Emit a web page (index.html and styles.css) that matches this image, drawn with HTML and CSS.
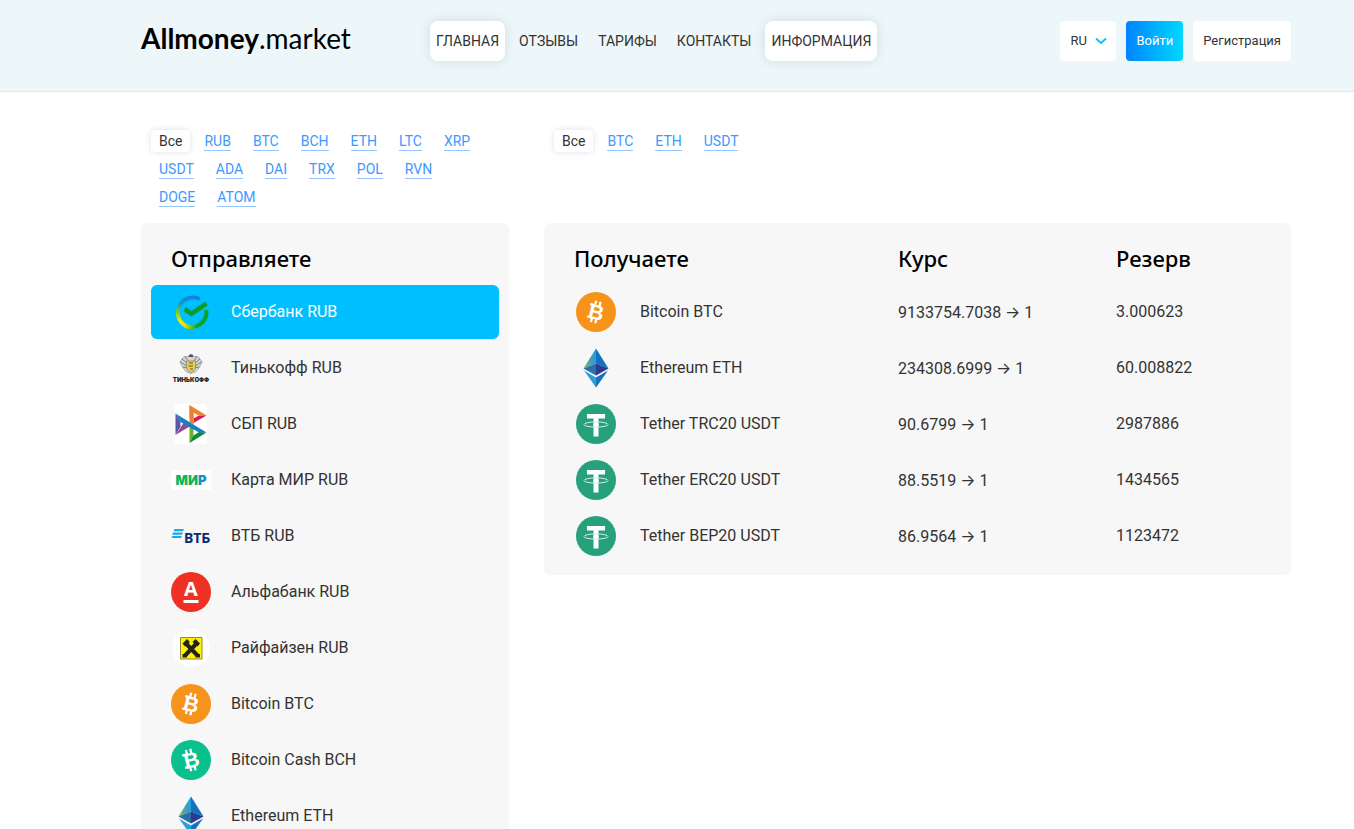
FILE: index.html
```html
<!DOCTYPE html>
<html lang="ru">
<head>
<meta charset="utf-8">
<title>Allmoney.market</title>
<meta name="viewport" content="width=device-width, initial-scale=1">
<link rel="stylesheet" href="styles.css">
</head>
<body>

<svg class="sprite" width="0" height="0" aria-hidden="true">
    <defs>
        <linearGradient id="g-eth" x1="0" y1="0.8" x2="1" y2="0.2">
            <stop offset="0" stop-color="#7bb267"/>
            <stop offset="0.6" stop-color="#3a9dc4"/>
            <stop offset="1" stop-color="#1fa2e0"/>
        </linearGradient>
        <linearGradient id="g-sber" gradientUnits="userSpaceOnUse" x1="22" y1="3" x2="12" y2="37">
            <stop offset="0" stop-color="#0f7fe0"/>
            <stop offset="0.35" stop-color="#10a0c8"/>
            <stop offset="0.6" stop-color="#7fd020"/>
            <stop offset="0.8" stop-color="#f2e500"/>
            <stop offset="1" stop-color="#e0e000"/>
        </linearGradient>
        <linearGradient id="g-sber2" gradientUnits="userSpaceOnUse" x1="14" y1="0" x2="26" y2="0">
            <stop offset="0" stop-color="#e0e000"/>
            <stop offset="1" stop-color="#0ba027"/>
        </linearGradient>
    </defs>
    <symbol id="i-sber" viewBox="0 0 40 40">
        <path d="M28.800 7.200A15 15 0 1 0 15 34" fill="none" stroke="url(#g-sber)" stroke-width="4"/>
        <path d="M14 33.600A15 15 0 0 0 35.300 18" fill="none" stroke="url(#g-sber2)" stroke-width="4"/>
        <path d="M13.500 17L20.300 21.800L35.500 11.500" fill="none" stroke="#109a2c" stroke-width="4.600"/>
    </symbol>
    <symbol id="i-sbp" viewBox="0 0 40 40">
        <path d="M4 0H36V40H4Z" fill="#fff"/>
        <path d="M4.500 9.500V31L9.500 22.500V18Z" fill="#5b57a2"/>
        <path d="M4.500 31L18.500 22.500L12.500 19L4.500 31Z" fill="#91498f"/>
        <path d="M18.500 1V13.500L22.500 16V8.500Z" fill="#f18b2c"/>
        <path d="M18.500 1L35.500 11.500H28L22 8.500Z" fill="#f0832c"/>
        <path d="M35.500 11.500L22.500 19V14.500L28 11.500Z" fill="#d91a53"/>
        <path d="M18.500 1V18L22.500 20.500V8.500Z" fill="#ee7d2e"/>
        <path d="M18.500 22V39L22.500 32.500V22Z" fill="#69b32d"/>
        <path d="M18.500 39L35.500 28.500L28 28L22.500 31.500Z" fill="#0a8b38"/>
        <path d="M4.500 9.500L35.500 28.500H28L9.500 18Z" fill="#1a7fc1"/>
    </symbol>
    <symbol id="i-raif" viewBox="0 0 40 40">
        <circle cx="20" cy="20" r="19" fill="#fff"/>
        <path d="M9.500 9.500H31V31H9.500Z" fill="#fff200" stroke="#8f8a45"/>
        <path d="M14 14.500L26.500 27.500M26.500 14.500L14 27.500" stroke="#222" stroke-width="4"/>
        <path d="M11.500 15.500L16 11L19 14L14 18.500ZM29 15.500L24.500 11L21.500 14L26.500 18.500Z" fill="#222"/>
        <path d="M11.500 26H16V29.500H11.500ZM24.500 26H29V29.500H24.500Z" fill="#222"/>
    </symbol>
    <symbol id="i-eth" viewBox="0 0 40 40">
        <path d="M20 0.500L7.500 20.500L20 15.500Z" fill="url(#g-eth)"/>
        <path d="M20 0.500L32.500 20.500L20 15.500Z" fill="#1173bd"/>
        <path d="M7.500 20.500L20 15.500V27.500Z" fill="#2b6fa5"/>
        <path d="M32.500 20.500L20 15.500V27.500Z" fill="#2b3a92"/>
        <path d="M8 22.500L20 29.500V39.500Z" fill="#2c9fd8"/>
        <path d="M32 22.500L20 29.500V39.500Z" fill="#1272bc"/>
    </symbol>
    <symbol id="i-usdt" viewBox="0 0 40 40">
        <circle cx="20" cy="20" r="20" fill="#26a17b"/>
        <path d="M11 10H29V14.500H22.500V32.500H17.500V14.500H11Z" fill="#fff"/>
        <ellipse cx="20" cy="20.500" rx="12" ry="2.600" fill="none" stroke="#d5eee6" stroke-width="1"/>
        <path d="M17.500 19.500H22.500V22H17.500Z" fill="#fff"/>
    </symbol>
    <symbol id="i-ticks" viewBox="0 0 40 40">
        <path d="M17.500 9V13.500M22 9V13.500M17.500 26.500V31M22 26.500V31" stroke="#fff" stroke-width="2.200"/>
        <path d="M12.500 13.700H17M12.500 26.300H17" stroke="#fff" stroke-width="2.400"/>
    </symbol>
</svg>

<header class="header">
    <div class="container header-in">
        <a class="logo" href="#"><b>Allmoney</b>.market</a>
        <nav class="menu">
            <a class="active" href="#">Главная</a>
            <a href="#">Отзывы</a>
            <a href="#">Тарифы</a>
            <a href="#">Контакты</a>
            <a class="active" href="#">Информация</a>
        </nav>
        <div class="user">
            <div class="lang">
                <select aria-label="Язык">
                    <option>RU</option>
                    <option>EN</option>
                </select>
                <svg width="12" height="8" viewBox="0 0 12 8"><path d="M1 1.500L6 6L11 1.500" fill="none" stroke="#00c3f5" stroke-width="1.700"/></svg>
            </div>
            <button class="btn btn-login" type="button">Войти</button>
            <button class="btn" type="button">Регистрация</button>
        </div>
    </div>
</header>

<main class="container exchange">
    <section class="col">
        <div class="filter">
            <a class="current" href="#">Все</a>
            <a href="#"><span>RUB</span></a>
            <a href="#"><span>BTC</span></a>
            <a href="#"><span>BCH</span></a>
            <a href="#"><span>ETH</span></a>
            <a href="#"><span>LTC</span></a>
            <a href="#"><span>XRP</span></a>
            <a href="#"><span>USDT</span></a>
            <a href="#"><span>ADA</span></a>
            <a href="#"><span>DAI</span></a>
            <a href="#"><span>TRX</span></a>
            <a href="#"><span>POL</span></a>
            <a href="#"><span>RVN</span></a>
            <a href="#"><span>DOGE</span></a>
            <a href="#"><span>ATOM</span></a>
        </div>
        <div class="panel">
            <h2>Отправляете</h2>
            <div class="send">
                <button class="selected" type="button"><svg class="icon"><use href="#i-sber"/></svg>Сбербанк RUB</button>
                <button type="button">
                    <svg class="icon" viewBox="0 0 40 40">
                        <path d="M20 6.500L23 8.500H27L29 11L31 14L28.500 19L25 23.500L20 25.500L15 23.500L11.500 19L9 14L11 11L13 8.500H17Z" fill="#d6d6d6" stroke="#9a9a9a" stroke-width="0.800"/>
                        <path d="M11 11L16 15M9.500 14L16 18M12 19L17 20M29 11L24 15M30.500 14L24 18M28 19L23 20M14 9L17.500 13M26 9L22.500 13" stroke="#666" stroke-width="0.800"/>
                        <path d="M18.500 6.500H21.500L22.500 9H17.500Z" fill="#555"/>
                        <path d="M15.500 13H24.500V20Q23 23.500 20 24.500Q17 23.500 15.500 20Z" fill="#f0cf45" stroke="#777" stroke-width="0.600"/>
                        <path d="M18 15H22M17.500 18H22M19 21H22" stroke="#555" stroke-width="1.100"/>
                        <text x="20" y="34" text-anchor="middle" class="logo-tinkoff">ТИНЬКОФФ</text>
                    </svg>
                    Тинькофф RUB
                </button>
                <button type="button"><svg class="icon"><use href="#i-sbp"/></svg>СБП RUB</button>
                <button type="button">
                    <svg class="icon" viewBox="0 0 40 40">
                        <path d="M0 10H40V30H0Z" fill="#fff"/>
                        <text x="20" y="25" text-anchor="middle" class="logo-mir">МИ<tspan fill="#1192c8">Р</tspan></text>
                    </svg>
                    Карта МИР RUB
                </button>
                <button type="button">
                    <svg class="icon" viewBox="0 0 40 40">
                        <path d="M3.500 13H13L12 15.300H2.500ZM2 16.500H12L11 18.700H1ZM1.500 20H11L10 22H0.500Z" fill="#1ba8e4"/>
                        <text x="13" y="27" class="logo-vtb">ВТБ</text>
                    </svg>
                    ВТБ RUB
                </button>
                <button type="button">
                    <svg class="icon" viewBox="0 0 40 40">
                        <circle cx="20" cy="20" r="20" fill="#ef3124"/>
                        <text x="20" y="24" text-anchor="middle" class="logo-alfa">А</text>
                        <path d="M12.500 28H27.500V31H12.500Z" fill="#fff"/>
                    </svg>
                    Альфабанк RUB
                </button>
                <button type="button"><svg class="icon"><use href="#i-raif"/></svg>Райфайзен RUB</button>
                <button type="button">
                    <svg class="icon" viewBox="0 0 40 40">
                        <circle cx="20" cy="20" r="20" fill="#f7931a"/>
                        <g transform="rotate(14 20 20)"><use href="#i-ticks"/><text x="20.500" y="27.500" text-anchor="middle" class="logo-coin">B</text></g>
                    </svg>
                    Bitcoin BTC
                </button>
                <button type="button">
                    <svg class="icon" viewBox="0 0 40 40">
                        <circle cx="20" cy="20" r="20" fill="#0ac18e"/>
                        <g transform="rotate(-14 20 20)"><use href="#i-ticks"/><text x="20.500" y="27.500" text-anchor="middle" class="logo-coin">B</text></g>
                    </svg>
                    Bitcoin Cash BCH
                </button>
                <button type="button"><svg class="icon"><use href="#i-eth"/></svg>Ethereum ETH</button>
            </div>
        </div>
    </section>

    <section class="col">
        <div class="filter">
            <a class="current" href="#">Все</a>
            <a href="#"><span>BTC</span></a>
            <a href="#"><span>ETH</span></a>
            <a href="#"><span>USDT</span></a>
        </div>
        <div class="panel">
            <table class="receive">
                <thead>
                    <tr><th class="c-name">Получаете</th><th class="c-rate">Курс</th><th>Резерв</th></tr>
                </thead>
                <tbody>
                    <tr>
                        <td>
                            <div class="coin">
                                <svg class="icon" viewBox="0 0 40 40">
                                    <circle cx="20" cy="20" r="20" fill="#f7931a"/>
                                    <g transform="rotate(14 20 20)"><use href="#i-ticks"/><text x="20.500" y="27.500" text-anchor="middle" class="logo-coin">B</text></g>
                                </svg>
                                Bitcoin BTC
                            </div>
                        </td>
                        <td>9133754.7038 <span class="arrow">→</span> 1</td>
                        <td>3.000623</td>
                    </tr>
                    <tr>
                        <td><div class="coin"><svg class="icon"><use href="#i-eth"/></svg>Ethereum ETH</div></td>
                        <td>234308.6999 <span class="arrow">→</span> 1</td>
                        <td>60.008822</td>
                    </tr>
                    <tr>
                        <td><div class="coin"><svg class="icon"><use href="#i-usdt"/></svg>Tether TRC20 USDT</div></td>
                        <td>90.6799 <span class="arrow">→</span> 1</td>
                        <td>2987886</td>
                    </tr>
                    <tr>
                        <td><div class="coin"><svg class="icon"><use href="#i-usdt"/></svg>Tether ERC20 USDT</div></td>
                        <td>88.5519 <span class="arrow">→</span> 1</td>
                        <td>1434565</td>
                    </tr>
                    <tr>
                        <td><div class="coin"><svg class="icon"><use href="#i-usdt"/></svg>Tether BEP20 USDT</div></td>
                        <td>86.9564 <span class="arrow">→</span> 1</td>
                        <td>1123472</td>
                    </tr>
                </tbody>
            </table>
        </div>
    </section>
</main>

</body>
</html>
```
FILE: styles.css
```css
* {
    box-sizing: border-box;
}
body {
    margin: 0;
    background: #fff;
    color: #333;
    font: 16px/22px Roboto, "Noto Sans", sans-serif;
}
a {
    color: inherit;
    text-decoration: none;
}
button, select {
    border: 0;
    font: inherit;
    color: inherit;
    cursor: pointer;
}
.sprite {
    position: absolute;
}
.container {
    padding: 0 63px 0 141px;
}

/* header */
.header {
    background: #edf6f9;
    border-bottom: 1px solid #dce9ed;
}
.header-in {
    display: flex;
    align-items: flex-start;
    padding-top: 21px;
    padding-bottom: 30px;
}
.logo {
    width: 289px;
    color: #000;
    font: 28px/34px Lato, sans-serif;
}
.menu {
    display: flex;
    gap: 8px;
    font-size: 14px;
    line-height: 40px;
    text-transform: uppercase;
}
.menu a {
    padding: 0 6px;
    border-radius: 8px;
}
.menu .active {
    background: #fff;
    box-shadow: 0 0 12px rgba(0, 60, 80, 0.12);
}
.user {
    display: flex;
    gap: 10px;
    margin-left: auto;
    font-size: 13px;
}
.btn, .lang select {
    height: 40px;
    padding: 0 10px;
    border-radius: 4px;
    background: #fff;
}
.btn-login {
    background: linear-gradient(90deg, #0084ff, #00d8ff);
    color: #fff;
}
.lang {
    position: relative;
}
.lang select {
    width: 56px;
    appearance: none;
}
.lang svg {
    position: absolute;
    right: 9px;
    top: 16px;
    pointer-events: none;
}

/* exchange */
.exchange {
    display: grid;
    grid-template-columns: 368px 1fr;
    gap: 35px;
    padding-top: 35px;
}
.col {
    display: flex;
    flex-direction: column;
}
.filter {
    display: flex;
    flex-wrap: wrap;
    align-content: flex-start;
    gap: 0 6px;
    height: 96px;
    padding: 0 16px 0 10px;
    font-size: 14px;
    line-height: 18px;
}
.filter a {
    height: 28px;
    padding: 5px 8px;
    color: #3d98ff;
}
.filter span {
    display: block;
    border-bottom: 1px solid #93c5ff;
}
.filter .current {
    height: 22px;
    margin: 3px 0;
    padding: 2px 8px;
    border-radius: 4px;
    box-shadow: 0 0 6px rgba(0, 60, 120, 0.15);
    color: #333;
}
.panel {
    padding: 10px;
    border-radius: 6px;
    background: #f7f7f7;
}
.panel h2, .receive th {
    height: 52px;
    margin: 0;
    padding: 0 0 0 20px;
    color: #000;
    font: 500 22px/50px "Noto Sans", sans-serif;
    text-align: left;
    vertical-align: top;
}
.icon {
    flex: none;
    width: 40px;
    height: 40px;
}
.send {
    display: grid;
    gap: 2px;
}
.send button {
    display: flex;
    align-items: center;
    gap: 20px;
    height: 54px;
    padding: 0 20px;
    border-radius: 6px;
    background: none;
}
.send .selected {
    background: #00bfff;
    color: #fff;
}
.receive {
    width: 100%;
    table-layout: fixed;
    border-collapse: collapse;
}
.receive .c-name {
    width: 344px;
}
.receive .c-rate {
    width: 218px;
}
.receive th + th {
    padding-left: 0;
}
.receive td {
    height: 56px;
    padding: 0 0 2px;
}
.coin {
    display: flex;
    align-items: center;
    gap: 24px;
    padding-left: 22px;
}
.arrow {
    font-family: Inter, sans-serif;
}

/* lettering inside the logos */
.logo-tinkoff {
    font: 900 6px Inter, sans-serif;
    fill: #222;
}
.logo-mir {
    font: 900 13px Inter, sans-serif;
    fill: #0eb55b;
}
.logo-vtb {
    font: bold 14px "Noto Sans", sans-serif;
    fill: #0a2973;
}
.logo-alfa {
    font: bold 20px "Open Sans", sans-serif;
    fill: #fff;
}
.logo-coin {
    font: bold 21px "Liberation Sans", sans-serif;
    fill: #fff;
}
```
